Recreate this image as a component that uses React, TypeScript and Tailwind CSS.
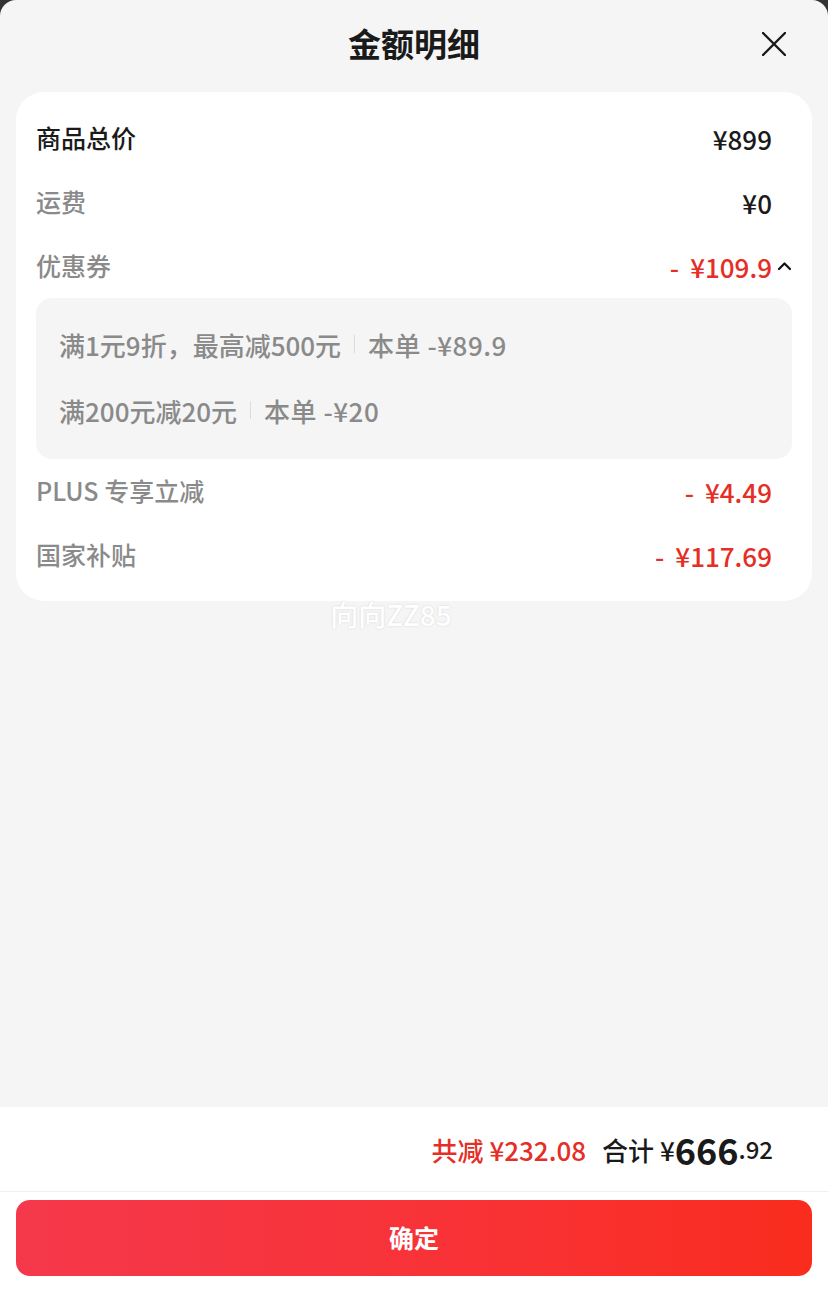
import React from "react";

const FONT = { fontFamily: '"Noto Sans CJK SC", "Noto Sans", sans-serif' };

function Row({ label, value, minus, labelClass, valueClass, chevron }: { label: string; value: string; minus?: boolean; labelClass: string; valueClass: string; chevron?: boolean }) {
  return (
    <div className="flex h-[64px] items-center justify-between">
      <span className={`text-[25px] ${labelClass}`}>{label}</span>
      <div className="flex items-center">
        {minus && <span className={`mr-[11px] text-[26px] font-medium ${valueClass}`}>-</span>}
        <span className={`text-[26px] font-medium ${valueClass}`}>{value}</span>
        <div className="flex w-[20px] justify-end">
          {chevron && (
            <svg width="15" height="10" viewBox="0 0 15 10" fill="none">
              <path d="M2 8 L7.5 2.5 L13 8" stroke="#111" strokeWidth="2.2" strokeLinecap="round" strokeLinejoin="round" />
            </svg>
          )}
        </div>
      </div>
    </div>
  );
}

function CouponLine({ left, right }: { left: string; right: string }) {
  return (
    <div className="flex h-[66px] items-center text-[26px] font-medium text-[#8a8a8a]">
      <span>{left}</span>
      <span className="mx-[13px] h-[18px] w-px bg-[#dcdcdc]" />
      <span className="tracking-[0.5px]">{right}</span>
    </div>
  );
}

export default function App() {
  return (
    <div className="flex h-[1298px] w-[828px] flex-col bg-[#333]" style={FONT}>
      <div className="flex flex-1 flex-col rounded-t-[16px] bg-[#f5f5f5]">
        <div className="relative flex h-[88px] items-center justify-center">
          <span className="text-[33px] font-bold text-[#1a1a1a]">金额明细</span>
          <button className="absolute right-[42px] top-[32px]">
            <svg width="24" height="24" viewBox="0 0 24 24" fill="none">
              <path d="M1 1 L23 23 M23 1 L1 23" stroke="#1a1a1a" strokeWidth="2.4" strokeLinecap="round" />
            </svg>
          </button>
        </div>
        <div className="mx-4 mt-[4px] rounded-[28px] bg-white px-5 pb-[14px] pt-[14px]">
          <Row label="商品总价" value="¥899" labelClass="font-medium text-[#1a1a1a]" valueClass="text-[#1a1a1a]" />
          <Row label="运费" value="¥0" labelClass="font-medium text-[#8a8a8a]" valueClass="text-[#1a1a1a]" />
          <Row label="优惠券" value="¥109.9" minus labelClass="font-medium text-[#8a8a8a]" valueClass="text-[#e52e26]" chevron />
          <div className="rounded-[16px] bg-[#f5f5f5] pb-[16px] pl-[23px] pt-[13px]">
            <CouponLine left="满1元9折，最高减500元" right="本单 -¥89.9" />
            <CouponLine left="满200元减20元" right="本单 -¥20" />
          </div>
          <Row label="PLUS 专享立减" value="¥4.49" minus labelClass="font-medium text-[#8a8a8a]" valueClass="text-[#e52e26]" />
          <Row label="国家补贴" value="¥117.69" minus labelClass="font-medium text-[#8a8a8a]" valueClass="text-[#e52e26]" />
        </div>
        <div className="-mt-[8px] flex justify-center pr-[46px]">
          <span className="text-[28px] font-medium text-white [text-shadow:0_0_2px_rgba(0,0,0,0.15)]">向向ZZ85</span>
        </div>
        <div className="flex-1" />
        <div className="bg-white">
          <div className="flex h-[85px] items-center justify-end border-b border-[#efefef] pr-[55px]">
            <span className="text-[26px] font-medium text-[#e52e26]">共减 ¥232.08</span>
            <span className="ml-[16px] text-[26px] font-medium text-[#1a1a1a]">合计 ¥</span>
            <span className="text-[36px] font-bold leading-none text-[#1a1a1a]">666</span>
            <span className="text-[24px] font-medium text-[#1a1a1a]">.92</span>
          </div>
          <div className="px-4 pb-[22px] pt-[8px]">
            <button className="flex h-[76px] w-full items-center justify-center rounded-[14px] bg-gradient-to-r from-[#f5384b] to-[#fa2c1d] text-[25px] font-bold text-white">
              确定
            </button>
          </div>
        </div>
      </div>
    </div>
  );
}
